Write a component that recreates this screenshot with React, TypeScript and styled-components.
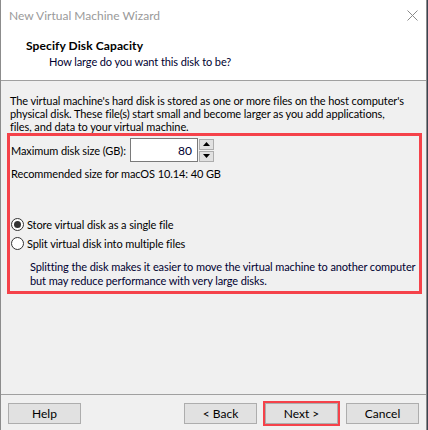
import styled, { createGlobalStyle } from "styled-components";

const GlobalStyle = createGlobalStyle`
  html, body {
    margin: 0;
    padding: 0;
    background: #3b4350;
  }
  body {
    font-family: Lato, "Liberation Sans", Arial, sans-serif;
    font-size: 11px;
    letter-spacing: -0.1px;
    color: #000;
  }
`;

const App = () => {
  return (
    <>
      <GlobalStyle />
      <Window>
        <TitleBar>
          <TitleText>New Virtual Machine Wizard</TitleText>
          <CloseIcon width="11" height="11" viewBox="0 0 11 11">
            <path d="M0.5 0.5 L10.5 10.5 M10.5 0.5 L0.5 10.5" stroke="#8a8a8a" strokeWidth="1" />
          </CloseIcon>
        </TitleBar>
        <Header>
          <HeaderTitle>Specify Disk Capacity</HeaderTitle>
          <HeaderSub>How large do you want this disk to be?</HeaderSub>
        </Header>
        <Body>
          <Intro>
            The virtual machine's hard disk is stored as one or more files on the host computer's
            <br />
            physical disk. These file(s) start small and become larger as you add applications,
            <br />
            files, and data to your virtual machine.
          </Intro>
          <Highlight>
            <SizeRow>
              <span>Maximum disk size (GB):</span>
              <Spinner>
                <NumberBox>80</NumberBox>
                <SpinButtons>
                  <SpinButton>
                    <svg width="7" height="4" viewBox="0 0 7 4">
                      <path d="M3.5 0 L7 4 L0 4 Z" fill="#000" />
                    </svg>
                  </SpinButton>
                  <SpinButton>
                    <svg width="7" height="4" viewBox="0 0 7 4">
                      <path d="M0 0 L7 0 L3.5 4 Z" fill="#000" />
                    </svg>
                  </SpinButton>
                </SpinButtons>
              </Spinner>
            </SizeRow>
            <Recommended>Recommended size for macOS 10.14: 40 GB</Recommended>
            <RadioRow $first>
              <Radio $checked />
              <span>Store virtual disk as a single file</span>
            </RadioRow>
            <RadioRow>
              <Radio />
              <span>Split virtual disk into multiple files</span>
            </RadioRow>
            <Note>
              Splitting the disk makes it easier to move the virtual machine to another computer
              <br />
              but may reduce performance with very large disks.
            </Note>
          </Highlight>
        </Body>
        <Footer>
          <Button>Help</Button>
          <ButtonGroup>
            <Button>&lt; Back</Button>
            <NextWrap>
              <Button>Next &gt;</Button>
            </NextWrap>
            <Button>Cancel</Button>
          </ButtonGroup>
        </Footer>
      </Window>
    </>
  );
};

export default App;

const Window = styled.div`
  width: 427px;
  height: 430px;
  display: flex;
  flex-direction: column;
  background: #f0f0f0;
  border-left: 1px solid #8c8c8c;
  border-right: 1px solid #8c8c8c;
  box-sizing: border-box;
`;

const TitleBar = styled.div`
  height: 31px;
  background: #fff;
  display: flex;
  align-items: center;
  justify-content: space-between;
  padding: 0 8px 0 8px;
`;

const TitleText = styled.div`
  color: #9a9a9a;
  font-size: 12px;
  letter-spacing: 0;
`;

const CloseIcon = styled.svg`
  margin-top: -1px;
`;

const Header = styled.div`
  height: 50px;
  background: #fff;
  border-bottom: 1px solid #a0a0a0;
  padding: 7px 0 0 25px;
  box-sizing: border-box;
`;

const HeaderTitle = styled.div`
  font-weight: bold;
  font-size: 12px;
  letter-spacing: 0.1px;
  line-height: 15px;
`;

const HeaderSub = styled.div`
  padding-left: 23px;
  line-height: 15px;
  margin-top: 1px;
  color: #000030;
`;

const Body = styled.div`
  flex: 1;
  padding: 13px 6px 0 6px;
  border-bottom: 1px solid #a0a0a0;
`;

const Intro = styled.p`
  margin: 0 0 0 3px;
  line-height: 13px;
  white-space: nowrap;
`;

const Highlight = styled.div`
  width: 415px;
  height: 161px;
  box-sizing: border-box;
  border: 3px solid #f5424a;
  padding: 2px 0 0 1px;
`;

const SizeRow = styled.div`
  display: flex;
  align-items: center;
  gap: 4px;
`;

const Spinner = styled.div`
  display: flex;
  align-items: center;
  gap: 1px;
`;

const NumberBox = styled.div`
  width: 68px;
  height: 24px;
  box-sizing: border-box;
  border: 1px solid #7a7a7a;
  background: #fff;
  display: flex;
  align-items: center;
  justify-content: flex-end;
  padding-right: 5px;
  color: #000030;
  font-size: 12px;
`;

const SpinButtons = styled.div`
  display: flex;
  flex-direction: column;
  gap: 1px;
`;

const SpinButton = styled.div`
  width: 15px;
  height: 11px;
  box-sizing: border-box;
  border: 1px solid #adadad;
  background: #e1e1e1;
  display: flex;
  align-items: center;
  justify-content: center;
`;

const Recommended = styled.div`
  margin-top: 5px;
  line-height: 14px;
`;

const RadioRow = styled.div<{ $first?: boolean }>`
  display: flex;
  align-items: center;
  gap: 3px;
  height: 15px;
  margin-top: ${(p) => (p.$first ? "36px" : "4px")};
`;

const Radio = styled.span<{ $checked?: boolean }>`
  width: 13px;
  height: 13px;
  box-sizing: border-box;
  border-radius: 50%;
  border: 1px solid #333;
  background: #fff;
  display: flex;
  align-items: center;
  justify-content: center;
  &::after {
    content: "";
    width: 7px;
    height: 7px;
    border-radius: 50%;
    background: ${(p) => (p.$checked ? "#333" : "transparent")};
  }
`;

const Note = styled.div`
  margin: 9px 0 0 19px;
  line-height: 14px;
  white-space: nowrap;
  color: #000030;
`;

const Footer = styled.div`
  height: 35px;
  display: flex;
  align-items: flex-start;
  justify-content: space-between;
  padding: 8px 7px 0 7px;
  box-sizing: border-box;
`;

const ButtonGroup = styled.div`
  display: flex;
  gap: 8px;
`;

const NextWrap = styled.div`
  outline: 2px solid #f5424a;
  outline-offset: 0px;
`;

const Button = styled.div`
  width: 73px;
  height: 21px;
  box-sizing: border-box;
  border: 1px solid #adadad;
  background: #e1e1e1;
  display: flex;
  align-items: center;
  justify-content: center;
  font-size: 12px;
  letter-spacing: 0;
`;
